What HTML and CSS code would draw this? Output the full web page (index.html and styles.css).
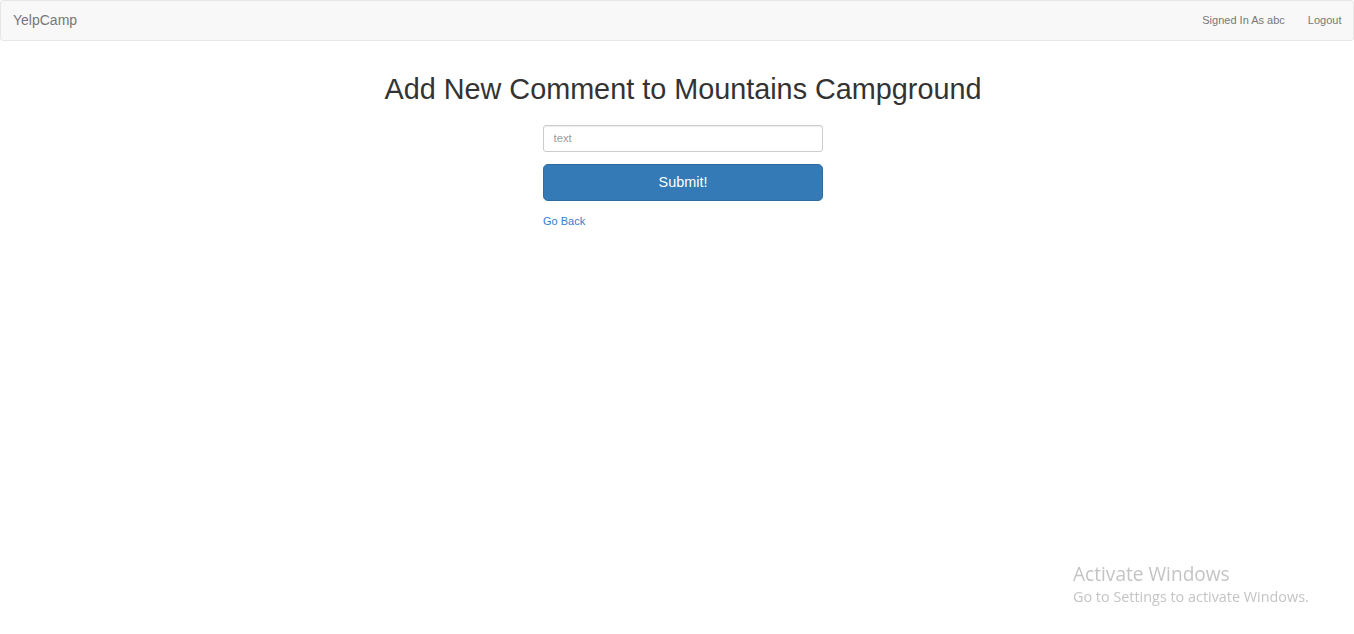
FILE: index.html
```html
<!DOCTYPE html>
<html>
<head>
<meta charset="utf-8">
<title>YelpCamp</title>
<link rel="stylesheet" href="styles.css">
</head>
<body>
<nav class="navbar">
  <div class="navbar-inner">
    <a class="brand" href="#">YelpCamp</a>
    <ul class="nav-right">
      <li><a href="#">Signed In As abc</a></li>
      <li><a href="#">Logout</a></li>
    </ul>
  </div>
</nav>
<main class="container">
  <h1 class="title">Add New Comment to Mountains Campground</h1>
  <form class="comment-form">
    <div class="form-group">
      <input class="form-control" type="text" name="comment[text]" placeholder="text">
    </div>
    <div class="form-group">
      <button class="btn-submit" type="button">Submit!</button>
    </div>
    <a class="back-link" href="#">Go Back</a>
  </form>
</main>
<div class="activate">
  <div class="activate-title">Activate Windows</div>
  <div class="activate-sub">Go to Settings to activate Windows.</div>
</div>
</body>
</html>
```
FILE: styles.css
```css
* { box-sizing: border-box; }
html, body { margin: 0; padding: 0; }
body {
  font-family: "Liberation Sans", Arial, sans-serif;
  font-size: 11.2px;
  line-height: 1.42857;
  color: #333;
  background: #fff;
}
a { text-decoration: none; }

.navbar {
  min-height: 41px;
  background: #f8f8f8;
  border: 1px solid #e7e7e7;
  border-radius: 3px;
  margin-bottom: 16px;
}
.navbar-inner {
  display: flex;
  justify-content: space-between;
  align-items: flex-start;
}
.brand {
  display: block;
  padding: 11px 12px 12px 12px;
  font-size: 14px;
  line-height: 16px;
  color: #777;
}
.nav-right {
  display: flex;
  list-style: none;
  margin: 0;
  padding: 0;
}
.nav-right a {
  display: block;
  padding: 12px 11.5px;
  font-size: 11px;
  line-height: 15px;
  color: #777;
}

.container {
  width: 936px;
  margin: 0 auto;
  padding-left: 12px;
  display: flex;
  flex-direction: column;
  align-items: center;
}
.title {
  font-family: "Liberation Sans", Arial, sans-serif;
  font-size: 28.8px;
  font-weight: 500;
  line-height: 1.1;
  margin: 17px 0 19px;
  color: #333;
}
.comment-form {
  width: 280px;
}
.form-group {
  margin-bottom: 12px;
}
.form-control {
  display: block;
  width: 100%;
  height: 27px;
  padding: 4.8px 9.6px;
  font-family: inherit;
  font-size: 11.2px;
  color: #555;
  background: #fff;
  border: 1px solid #ccc;
  border-radius: 3px;
  box-shadow: inset 0 1px 1px rgba(0,0,0,.075);
}
.form-control::placeholder { color: #999; }
.btn-submit {
  display: block;
  width: 100%;
  height: 37px;
  padding: 8px 12.8px;
  font-family: inherit;
  font-size: 14.4px;
  line-height: 1.33;
  color: #fff;
  background: #337ab7;
  border: 1px solid #2e6da4;
  border-radius: 4.8px;
}
.back-link {
  color: #2f80cc;
  font-size: 11px;
  line-height: 16px;
}

.activate {
  position: fixed;
  left: 1073px;
  top: 562px;
  font-family: "Open Sans", "Noto Sans", sans-serif;
  color: #c4c4c4;
}
.activate-title {
  font-size: 19.1px;
  line-height: 24px;
}
.activate-sub {
  font-size: 14.4px;
  line-height: 22px;
}
```
